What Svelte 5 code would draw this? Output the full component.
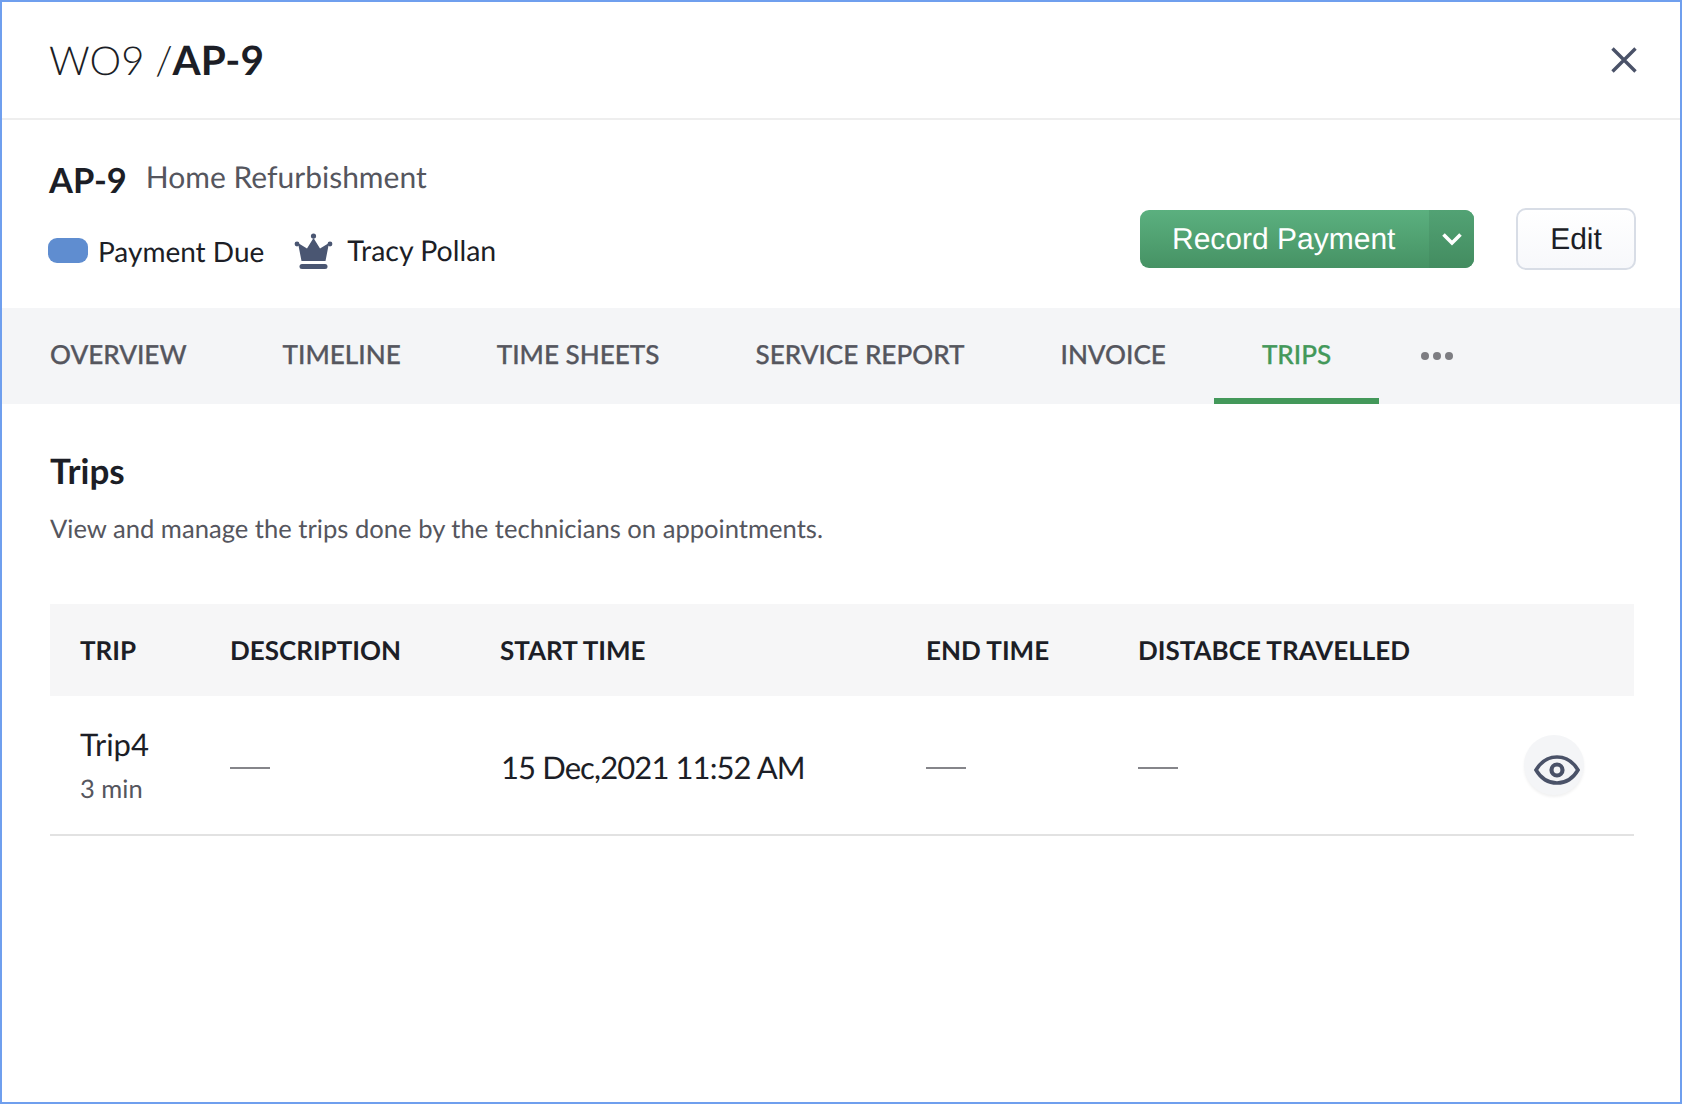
<script>
  const tabs = ['OVERVIEW', 'TIMELINE', 'TIME SHEETS', 'SERVICE REPORT', 'INVOICE', 'TRIPS'];
  const cols = ['TRIP', 'DESCRIPTION', 'START TIME', 'END TIME', 'DISTABCE TRAVELLED'];
</script>

<div class="frame">
  <header class="top">
    <h1><span class="light">WO9 /</span><b>AP-9</b></h1>
    <svg class="close" width="28" height="28" viewBox="0 0 28 28" aria-label="Close">
      <path d="M2.500 2.500 25.500 25.500M25.500 2.500 2.500 25.500" stroke="#4a5268" stroke-width="3.400" fill="none" />
    </svg>
  </header>

  <section class="summary">
    <div class="info">
      <div class="title"><b>AP-9</b><span>Home Refurbishment</span></div>
      <div class="meta">
        <i class="pill"></i><span class="due">Payment Due</span>
        <svg class="crown" width="39" height="36" viewBox="0 0 39 36">
          <path fill="#4a5672" d="M19.500 5 26 15.500 35 10 31.500 28H7.500L4 10 13 15.500Z" />
          <circle cx="19.500" cy="3" r="2.600" fill="#4a5672" />
          <circle cx="3" cy="11" r="2.400" fill="#4a5672" />
          <circle cx="36" cy="11" r="2.400" fill="#4a5672" />
          <rect x="5.500" y="31" width="28" height="5" rx="2.500" fill="#4a5672" />
        </svg>
        <span class="owner">Tracy Pollan</span>
      </div>
    </div>
    <div class="actions">
      <div class="record">
        <span class="label">Record Payment</span>
        <span class="caret">
          <svg width="22" height="16" viewBox="0 0 22 16"><path d="M2.500 3.500 11 12 19.500 3.500" fill="none" stroke="#fff" stroke-width="3.600" /></svg>
        </span>
      </div>
      <div class="edit">Edit</div>
    </div>
  </section>

  <nav class="tabs">
    {#each tabs as tab}
      <div class="tab" class:active={tab === 'TRIPS'}>{tab}</div>
    {/each}
    <div class="more"><i></i><i></i><i></i></div>
  </nav>

  <main class="content">
    <h2>Trips</h2>
    <p>View and manage the trips done by the technicians on appointments.</p>
    <div class="table">
      <div class="row head">
        {#each cols as col}<div>{col}</div>{/each}
      </div>
      <div class="row body">
        <div class="trip"><div>Trip4</div><small>3 min</small></div>
        <div><i class="dash"></i></div>
        <div class="start">15 Dec,2021 11:52 AM</div>
        <div><i class="dash"></i></div>
        <div><i class="dash"></i></div>
        <div class="view">
          <span class="eye">
            <svg width="46" height="32" viewBox="0 0 46 32">
              <path d="M2 16C7 7.500 14 3 23 3s16 4.500 21 13c-5 8.500-12 13-21 13S7 24.500 2 16Z" fill="none" stroke="#4a5268" stroke-width="3.600" />
              <circle cx="23" cy="16" r="5.500" fill="none" stroke="#4a5268" stroke-width="4.200" />
            </svg>
          </span>
        </div>
      </div>
    </div>
  </main>
</div>

<style>
  :global(body) { margin: 0; background: #fff; }
  .frame {
    box-sizing: border-box;
    width: 1682px;
    height: 1104px;
    border: 2px solid #6f9fee;
    font-family: Lato, "Liberation Sans", sans-serif;
    color: #1c1e26;
    overflow: hidden;
    text-rendering: geometricPrecision;
  }
  .top {
    height: 118px;
    box-sizing: border-box;
    border-bottom: 2px solid #eeeeee;
    display: flex;
    align-items: center;
    justify-content: space-between;
    padding: 0 42px 0 47px;
  }
  h1 { margin: 0; font-size: 40px; font-weight: 400; line-height: 1; }
  h1 .light { font-weight: 300; }
  h1 b { font-weight: 700; font-size: 40.500px; }
  .summary {
    height: 188px;
    box-sizing: border-box;
    display: flex;
    justify-content: space-between;
    padding: 0 44px 0 46px;
  }
  .title { display: flex; align-items: flex-start; margin-top: 37px; font-size: 30px; line-height: 40px; }
  .title b { font-size: 34.500px; margin: 0 19px 0 1px; padding-top: 3.500px; }
  .title span { color: #55565e; }
  .meta { display: flex; align-items: center; margin-top: 32px; font-size: 28px; line-height: 36px; }
  .pill { width: 40px; height: 25px; border-radius: 9px; background: #5f8dd0; margin-right: 10px; }
  .due { margin-right: 30px; }
  .crown { margin-right: 14px; }
  .owner { font-size: 28.500px; }
  .actions { display: flex; align-items: flex-start; margin-top: 88px; }
  .record {
    display: flex;
    width: 334px;
    height: 58px;
    margin-top: 2px;
    border-radius: 9px;
    overflow: hidden;
    color: #fff;
    background: linear-gradient(#5bb07f, #469264);
    font-family: "Liberation Sans", sans-serif;
    font-size: 30px;
  }
  .label { flex: 1; line-height: 60px; padding-left: 32px; }
  .caret {
    width: 45px;
    display: flex;
    align-items: center;
    justify-content: center;
    background: linear-gradient(#52a274, #438c60);
  }
  .edit {
    box-sizing: border-box;
    width: 120px;
    height: 62px;
    margin-left: 42px;
    border: 2px solid #d8dde6;
    border-radius: 10px;
    background: linear-gradient(#fff, #f7f8fb);
    text-align: center;
    line-height: 60px;
    font-family: "Liberation Sans", sans-serif;
    font-size: 30px;
  }
  .tabs {
    display: flex;
    height: 96px;
    background: #f4f5f7;
    font-size: 26.100px;
    color: #55565e;
    font-weight: 500;
  }
  .tab {
    box-sizing: border-box;
    padding: 0 48px;
    line-height: 92px;
    border-bottom: 6px solid transparent;
    height: 96px;
    -webkit-text-stroke: 0.3px currentColor;
  }
  .active { color: #43985a; border-bottom-color: #43985a; }
  .more { display: flex; align-items: center; gap: 4px; margin: 0 0 0 42px; }
  .more i { width: 8px; height: 8px; border-radius: 50%; background: #7d7d82; }
  .content { padding: 0 46px 0 48px; }
  h2 { margin: 0; padding-top: 47px; font-size: 35px; line-height: 40px; font-weight: 700; }
  .content p { margin: 20px 0 0; font-size: 25.600px; line-height: 36px; color: #55565e; }
  .table { margin: 57px 0 0 0; }
  .row {
    display: grid;
    grid-template-columns: 150px 270px 426px 212px 1fr 120px;
    padding-left: 30px;
    align-items: center;
  }
  .head {
    height: 92px;
    background: #f6f6f7;
    font-size: 26px;
    font-weight: 700;
  }
  .body {
    height: 140px;
    box-sizing: border-box;
    border-bottom: 2px solid #e2e2e2;
    font-size: 30px;
  }
  .trip { line-height: 36px; font-size: 31px; margin-top: 2px; }
  .trip small { display: block; margin-top: 9px; font-size: 25.500px; color: #55565e; line-height: 36px; }
  .dash { display: block; width: 40px; height: 2px; background: #85858a; margin-top: 5px; }
  .start { padding-left: 1px; margin-top: 3px; font-size: 31px; letter-spacing: -0.900px; }
  .view { display: flex; justify-content: flex-start; }
  .eye {
    width: 60px;
    height: 60px;
    margin-left: 10px;
    border-radius: 50%;
    background: #f4f5f7;
    box-shadow: 0 2px 3px rgba(0,0,0,.06);
    display: flex;
    align-items: center;
    justify-content: center;
  }
  .eye svg { margin: 9px 0 0 6px; flex: none; }
</style>
